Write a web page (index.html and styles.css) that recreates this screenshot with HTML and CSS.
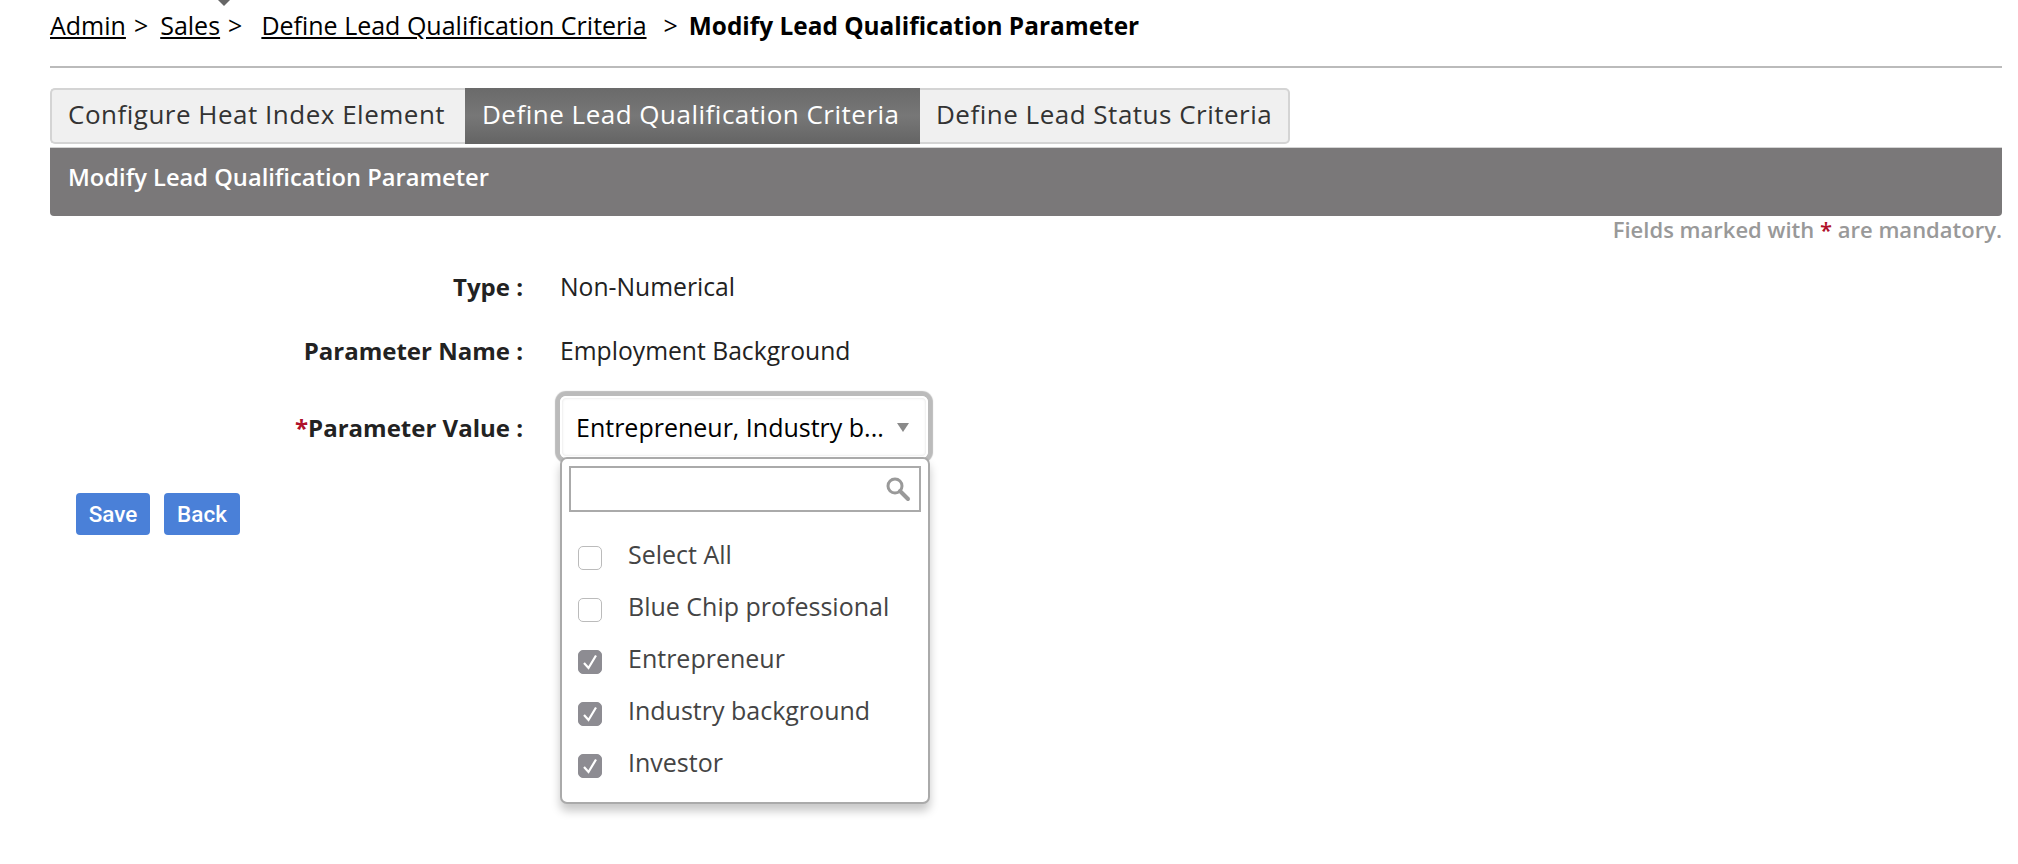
FILE: index.html
```html
<!DOCTYPE html>
<html lang="en">
<head>
<meta charset="utf-8">
<title>Modify Lead Qualification Parameter</title>
<link rel="stylesheet" href="styles.css">
</head>
<body>
<div class="page">
  <span class="caret"></span>
  <nav class="crumbs">
    <a href="#">Admin</a><span class="sep">&gt;</span><a href="#">Sales</a><span class="sep">&gt;</span><a class="gap" href="#">Define Lead Qualification Criteria</a><span class="sep gap">&gt;</span><b>Modify Lead Qualification Parameter</b>
  </nav>
  <hr class="rule">
  <div class="tabs">
    <a class="tab first" href="#">Configure Heat Index Element</a>
    <a class="tab active" href="#">Define Lead Qualification Criteria</a>
    <a class="tab last" href="#">Define Lead Status Criteria</a>
  </div>
  <div class="panel-head">Modify Lead Qualification Parameter</div>
  <p class="note">Fields marked with <span class="req">*</span> are mandatory.</p>
  <div class="form">
    <div class="row row-type"><span class="label">Type :</span><span class="value">Non-Numerical</span></div>
    <div class="row row-name"><span class="label">Parameter Name :</span><span class="value">Employment Background</span></div>
    <div class="row row-param">
      <span class="label"><span class="req">*</span>Parameter Value :</span>
      <div class="select-wrap">
        <div class="select">
          <span class="select-text">Entrepreneur, Industry b...</span>
          <svg class="select-arrow" width="14" height="10" viewBox="0 0 14 10"><path d="M1 1h12L7 10z" fill="#8a8a8a"/></svg>
        </div>
        <div class="menu">
          <div class="search">
            <svg width="26" height="26" viewBox="0 0 26 26"><circle cx="10" cy="10" r="7" fill="none" stroke="#999" stroke-width="3"/><path d="M15 15l8 8" stroke="#999" stroke-width="4" stroke-linecap="round"/></svg>
          </div>
          <ul class="options">
            <li><span class="box"></span>Select All</li>
            <li><span class="box"></span>Blue Chip professional</li>
            <li><span class="box on"><svg width="24" height="24" viewBox="0 0 24 24"><path d="M6 13l4.500 5L18 5.500" fill="none" stroke="#fff" stroke-width="2.200"/></svg></span>Entrepreneur</li>
            <li><span class="box on"><svg width="24" height="24" viewBox="0 0 24 24"><path d="M6 13l4.500 5L18 5.500" fill="none" stroke="#fff" stroke-width="2.200"/></svg></span>Industry background</li>
            <li><span class="box on"><svg width="24" height="24" viewBox="0 0 24 24"><path d="M6 13l4.500 5L18 5.500" fill="none" stroke="#fff" stroke-width="2.200"/></svg></span>Investor</li>
          </ul>
        </div>
      </div>
    </div>
    <div class="actions">
      <button class="btn save" type="button">Save</button>
      <button class="btn back" type="button">Back</button>
    </div>
  </div>
</div>
</body>
</html>
```
FILE: styles.css
```css
* { box-sizing: border-box; }
html, body { margin: 0; padding: 0; background: #fff; }
body { font-family: "Open Sans", "DejaVu Sans", sans-serif; font-size: 25px; color: #222; height: 864px; overflow: hidden; }
.page { position: relative; padding: 0 16px 0 50px; }
.caret { position: absolute; left: 218px; top: 0; width: 0; height: 0; border-left: 6px solid transparent; border-right: 6px solid transparent; border-top: 6px solid #666; }
.crumbs { height: 66px; padding-top: 8px; line-height: 34px; color: #000; white-space: nowrap; }
.crumbs a { color: #000; }
.crumbs .sep { margin: 0 12px 0 8px; }
.crumbs a.gap { margin-left: 7px; }
.crumbs .sep.gap { margin-left: 17px; margin-right: 11px; }
.crumbs b { font-weight: 700; font-size: 24.4px; }
.rule { margin: 0 0 20px; border: 0; border-top: 2px solid #bbb; }
.tabs { display: flex; height: 56px; margin-bottom: 3px; font-size: 26px; letter-spacing: .5px; }
.tab { display: flex; align-items: center; padding: 0 16px 4px; color: #333; text-decoration: none; background: #f0f0f0; border: 2px solid #d4d4d4; white-space: nowrap; }
.tab.first { width: 415px; border-right: 0; border-radius: 5px 0 0 5px; }
.tab.active { width: 455px; padding-left: 17px; color: #fff; border: 0; background: linear-gradient(#6a6a6a, #777 50%, #646464); }
.tab.last { width: 370px; border-left: 0; border-radius: 0 5px 5px 0; }
.panel-head { height: 69px; padding: 13px 18px 0; color: #fff; font-size: 23.7px; font-weight: 600; background: #7a7879; border-top: 1px solid #d4d4d4; border-radius: 0 0 4px 4px; }
.note { margin: 0; height: 29px; line-height: 26px; text-align: right; color: #999; font-size: 22px; font-weight: 600; }
.req { color: #b0102a; }
.form { padding-top: 22px; }
.row { display: grid; grid-template-columns: 473px 1fr; column-gap: 37px; align-items: center; }
.row-type { height: 38px; margin-bottom: 26px; }
.row-name { height: 38px; margin-bottom: 26px; }
.row-param { height: 65px; }
.value { font-size: 24.7px; }
.label { text-align: right; font-weight: 700; font-size: 24px; }
.select-wrap { position: relative; width: 368px; height: 65px; }
.select { display: flex; align-items: center; justify-content: space-between; height: 62px; padding: 0 16px 0 14px; border: 2px solid #fff; border-radius: 6px; box-shadow: 0 0 1px 5px #bbb, inset 0 0 3px #ddd; color: #000; margin-top: 1px; }
.select-text { white-space: nowrap; }
.menu { position: absolute; left: 0; top: 62px; width: 370px; height: 347px; padding: 7px; background: #fff; border: 2px solid #aaa; border-radius: 7px; box-shadow: 0 7px 10px rgba(0,0,0,.22); z-index: 2; }
.search { display: flex; align-items: center; justify-content: flex-end; height: 46px; padding-right: 8px; border: 2px solid #aaa; }
.options { list-style: none; margin: 16px 0 0; padding: 0; color: #444; }
.options li { display: flex; align-items: center; height: 52px; }
.box { flex: none; width: 24px; height: 24px; margin: 8px 26px 0 9px; border: 1px solid #bbb; border-radius: 5px; background: #fff; }
.box.on { background: #8d8c92; border-color: #8d8c92; }
.box svg { display: block; margin: -1px; }
.actions { display: flex; gap: 14px; margin: 33px 0 0 26px; }
.btn { height: 42px; padding: 0; font: 500 22.5px Roboto, "Liberation Sans", sans-serif; color: #fff; background: #4a80d8; border: 0; border-radius: 4px; }
.btn.save { width: 74px; }
.btn.back { width: 76px; }
```
